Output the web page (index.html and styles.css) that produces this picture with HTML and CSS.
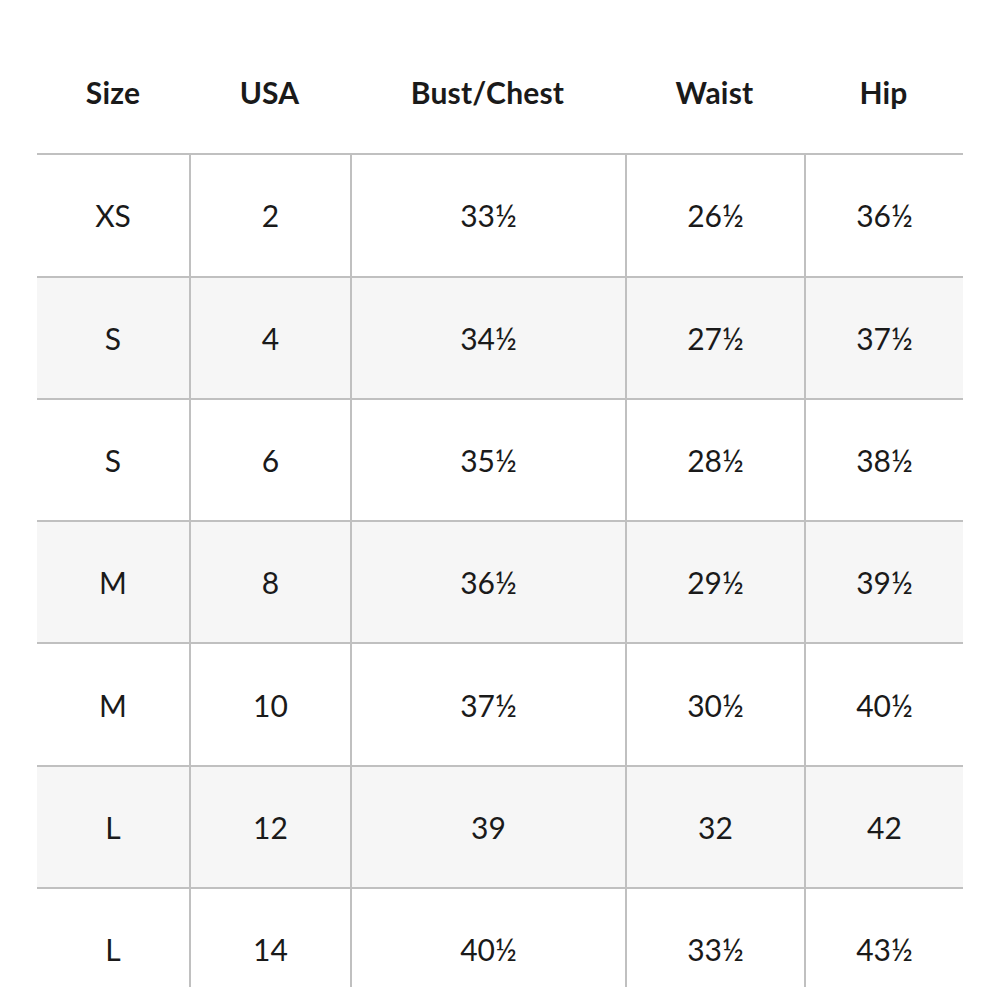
FILE: index.html
```html
<!DOCTYPE html>
<html>
<head>
<meta charset="utf-8">
<link rel="stylesheet" href="styles.css">
</head>
<body>
<div class="chart">
  <div class="grid">
    <div class="hd">Size</div><div class="hd">USA</div><div class="hd">Bust/Chest</div><div class="hd">Waist</div><div class="hd">Hip</div>

    <div class="c first">XS</div><div class="c">2</div><div class="c">33½</div><div class="c">26½</div><div class="c">36½</div>
    <div class="c first alt">S</div><div class="c alt">4</div><div class="c alt">34½</div><div class="c alt">27½</div><div class="c alt">37½</div>
    <div class="c first">S</div><div class="c">6</div><div class="c">35½</div><div class="c">28½</div><div class="c">38½</div>
    <div class="c first alt">M</div><div class="c alt">8</div><div class="c alt">36½</div><div class="c alt">29½</div><div class="c alt">39½</div>
    <div class="c first">M</div><div class="c">10</div><div class="c">37½</div><div class="c">30½</div><div class="c">40½</div>
    <div class="c first alt">L</div><div class="c alt">12</div><div class="c alt">39</div><div class="c alt">32</div><div class="c alt">42</div>
    <div class="c first">L</div><div class="c">14</div><div class="c">40½</div><div class="c">33½</div><div class="c">43½</div>
  </div>
</div>
</body>
</html>
```

FILE: styles.css
```css
html, body {
  margin: 0;
  padding: 0;
  background: #ffffff;
}

body {
  font-family: Lato, "Noto Sans", "Liberation Sans", sans-serif;
  color: #1a1a1a;
}

.chart {
  margin-left: 37px;
  width: 926px;
  padding-top: 31px;
  height: 956px;
  overflow: hidden;
}

.grid {
  display: grid;
  grid-template-columns: 152px 161px 275px 179px 159px;
  grid-auto-rows: 122.3px;
}

.hd {
  display: flex;
  align-items: center;
  justify-content: center;
  font-size: 30px;
  font-weight: 700;
  letter-spacing: 0.2px;
}

.c {
  display: flex;
  align-items: center;
  justify-content: center;
  box-sizing: border-box;
  border-top: 2px solid #c0c0c0;
  border-left: 2px solid #c0c0c0;
  font-size: 30px;
  font-weight: 400;
}

.c.first {
  border-left: none;
}

.c.alt {
  background: #f6f6f6;
}
```
